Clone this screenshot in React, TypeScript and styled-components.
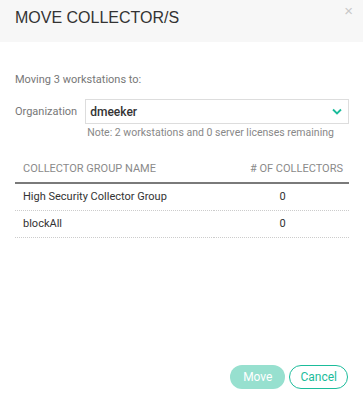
import React from "react";
import styled, { createGlobalStyle } from "styled-components";

const GlobalStyle = createGlobalStyle`
  html, body {
    margin: 0;
    padding: 0;
    background: #fff;
  }
  body {
    font-family: Roboto, "Liberation Sans", Arial, sans-serif;
  }
`;

const rows = [
  { name: "High Security Collector Group", count: 0 },
  { name: "blockAll", count: 0 },
];

export default function App() {
  return (
    <>
      <GlobalStyle />
      <Modal>
        <Header>
          <Title>MOVE COLLECTOR/S</Title>
          <Close aria-label="close">×</Close>
        </Header>
        <Body>
          <Intro>Moving 3 workstations to:</Intro>
          <Field>
            <FieldLabel>Organization</FieldLabel>
            <FieldControl>
              <Select>
                <SelectValue>dmeeker</SelectValue>
                <svg width="10" height="7" viewBox="0 0 10 7">
                  <path d="M1 1.5 L5 5.5 L9 1.5" fill="none" stroke="#1bbc9b" strokeWidth="1.8" />
                </svg>
              </Select>
              <Note>Note: 2 workstations and 0 server licenses remaining</Note>
            </FieldControl>
          </Field>
          <Table>
            <thead>
              <tr>
                <Th>Collector Group Name</Th>
                <Th align="right">#&nbsp;of Collectors</Th>
              </tr>
            </thead>
            <tbody>
              {rows.map((r) => (
                <tr key={r.name}>
                  <Td>{r.name}</Td>
                  <Td align="center">{r.count}</Td>
                </tr>
              ))}
            </tbody>
          </Table>
        </Body>
        <Footer>
          <Button disabled pad={12}>Move</Button>
          <Button outline pad={10}>Cancel</Button>
        </Footer>
      </Modal>
    </>
  );
}

const Modal = styled.div`
  width: 363px;
  height: 400px;
  display: flex;
  flex-direction: column;
  background: #fff;
`;

const Header = styled.div`
  height: 42px;
  flex-shrink: 0;
  background: #f7f7f7;
  display: flex;
  align-items: flex-start;
  justify-content: space-between;
  padding: 0 10px 0 15px;
  box-sizing: border-box;
`;

const Title = styled.h1`
  margin: 9px 0 0;
  font-family: "Liberation Sans", Arial, sans-serif;
  font-size: 16px;
  font-weight: 400;
  color: #333;
`;

const Close = styled.span`
  margin-top: 2px;
  font-family: "Liberation Sans", Arial, sans-serif;
  font-size: 15px;
  color: #c8c8c8;
  cursor: pointer;
`;

const Body = styled.div`
  flex: 1;
  padding: 31px 14px 0 15px;
`;

const Intro = styled.div`
  font-size: 11px;
  color: #777;
  margin-bottom: 13px;
`;

const Field = styled.div`
  display: flex;
  align-items: flex-start;
  gap: 8px;
`;

const FieldLabel = styled.div`
  font-size: 11px;
  color: #777;
  margin-top: 6px;
`;

const FieldControl = styled.div`
  flex: 1;
  display: flex;
  flex-direction: column;
`;

const Select = styled.div`
  height: 25px;
  box-sizing: border-box;
  border: 1px solid #ddd;
  display: flex;
  align-items: center;
  justify-content: space-between;
  padding: 0 6px 0 4px;
`;

const SelectValue = styled.span`
  font-size: 12px;
  font-weight: 500;
  color: #333;
`;

const Note = styled.div`
  font-size: 10.5px;
  color: #888;
  margin-top: 2px;
  padding-left: 2px;
`;

const Table = styled.table`
  width: 100%;
  margin-top: 23px;
  border-collapse: collapse;
  font-size: 11px;
`;

const Th = styled.th<{ align?: string }>`
  text-align: ${({ align }) => align || "left"};
  text-transform: uppercase;
  font-weight: 400;
  color: #8a8a8a;
  padding: 0 6px 7px 8px;
  border-bottom: 2px solid #7a7a7a;
  white-space: nowrap;
`;

const Td = styled.td<{ align?: string }>`
  text-align: ${({ align }) => align || "left"};
  color: #333;
  padding: 6px 6px 7px 8px;
  border-bottom: 1px dotted #ccc;
`;

const Footer = styled.div`
  display: flex;
  justify-content: flex-end;
  gap: 4px;
  padding: 0 15px 11px 0;
`;

const Button = styled.button<{ outline?: boolean; pad: number }>`
  height: 24px;
  padding: 0 ${({ pad }) => pad}px;
  border-radius: 12px;
  font-family: Roboto, "Liberation Sans", Arial, sans-serif;
  font-size: 12px;
  border: 1px solid ${({ outline }) => (outline ? "#1bbc9b" : "transparent")};
  background: ${({ outline }) => (outline ? "#fff" : "#97e0cf")};
  color: ${({ outline }) => (outline ? "#1bbc9b" : "#fff")};
  &:disabled {
    cursor: default;
  }
`;
